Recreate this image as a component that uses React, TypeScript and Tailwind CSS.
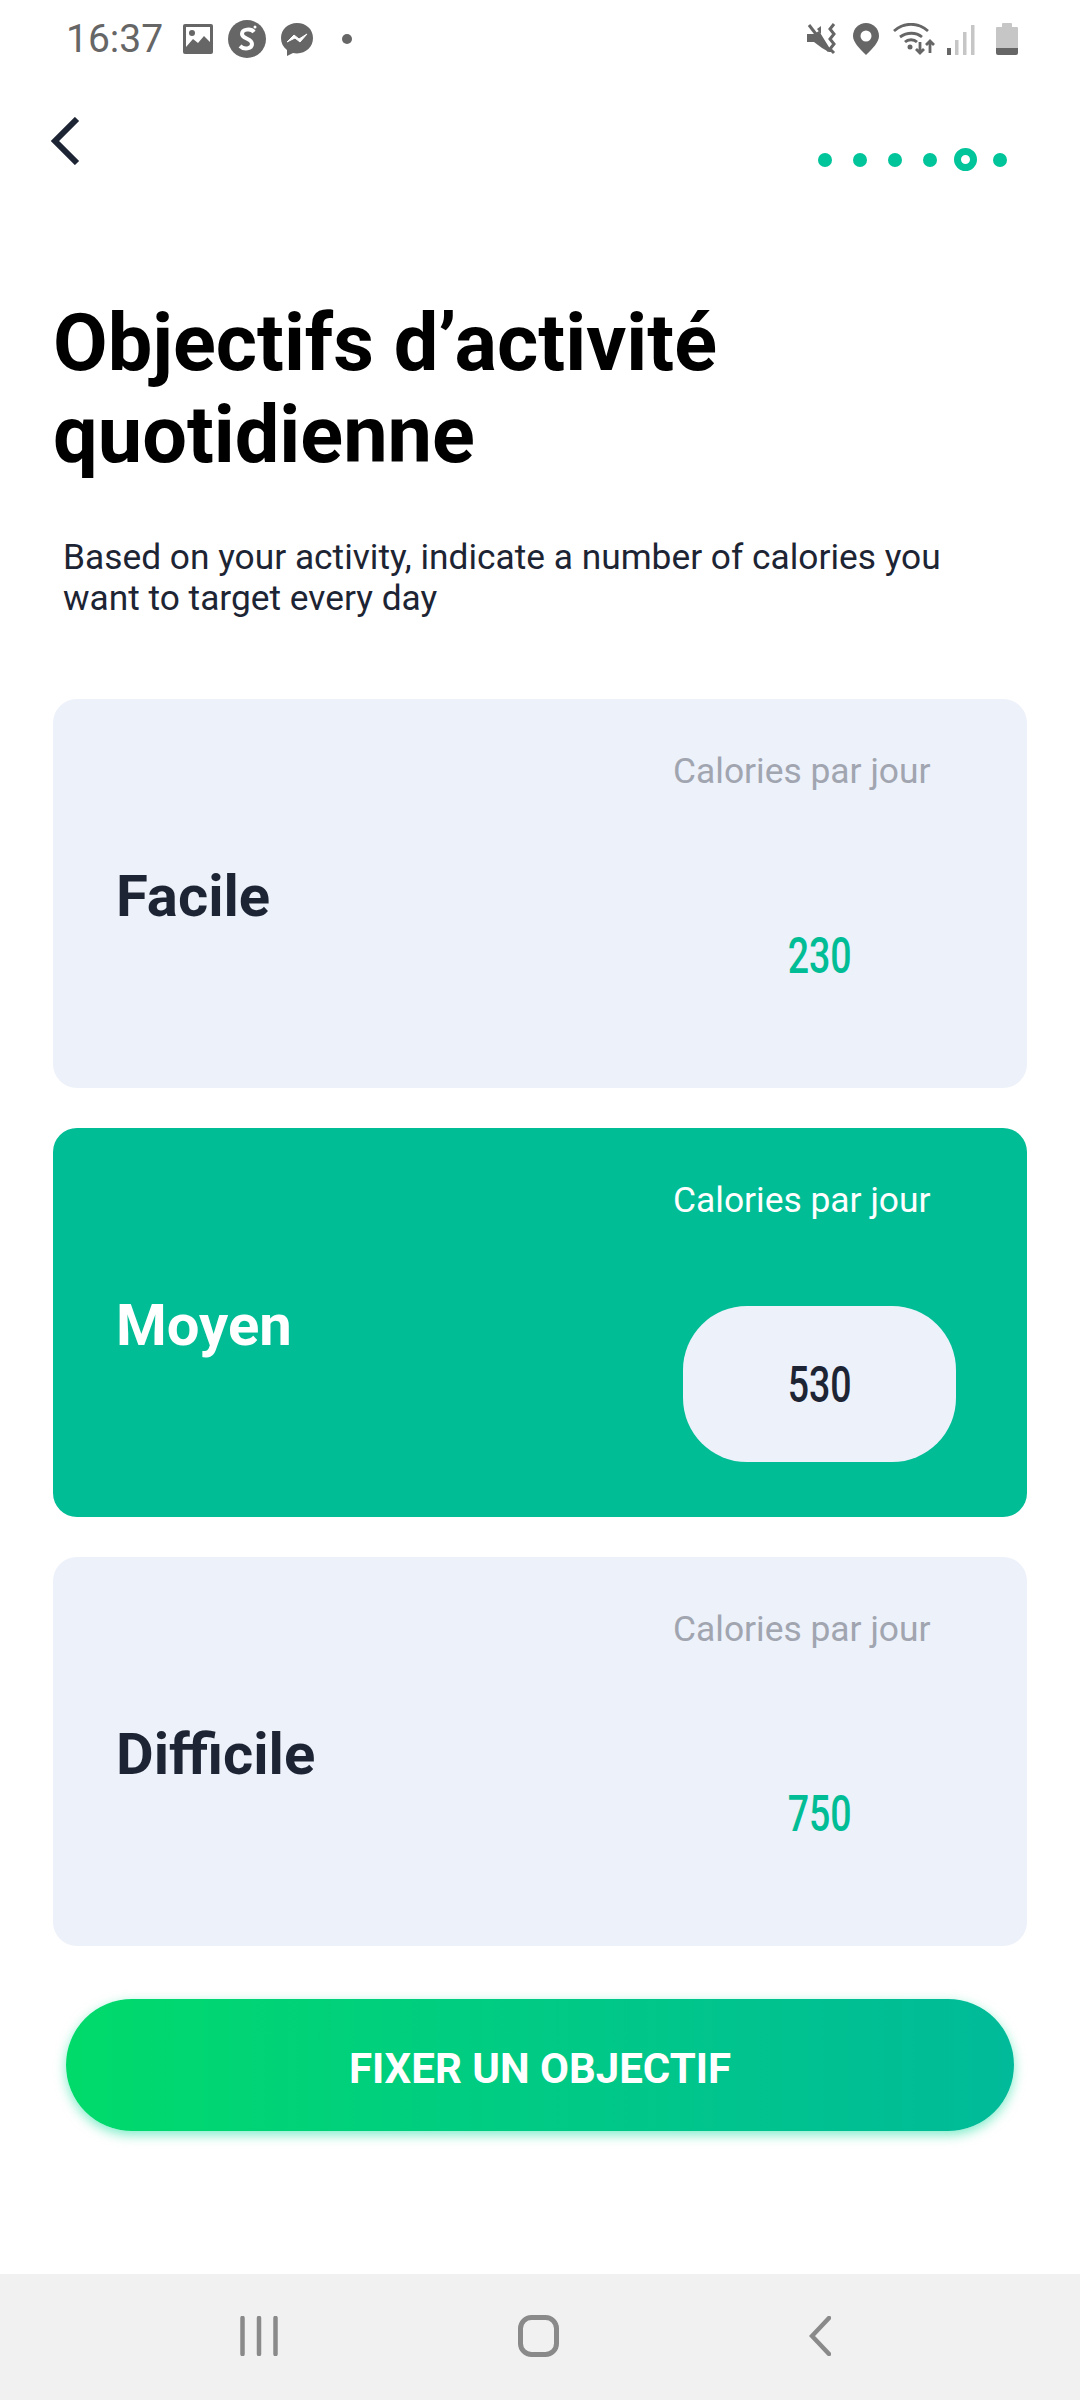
const Roboto = "font-['Roboto',sans-serif]";

const levels = [
  { name: "Facile", value: "230", active: false },
  { name: "Moyen", value: "530", active: true },
  { name: "Difficile", value: "750", active: false },
];

const StatusLeft = () => (
  <div className="flex items-center">
    <span className={`${Roboto} text-[39px] leading-none text-[#666]`}>16:37</span>
    <svg className="ml-[19px]" width="32" height="32" viewBox="0 0 32 32">
      <rect x="1" y="1" width="30" height="30" rx="2" fill="#666" />
      <rect x="4" y="4" width="24" height="22" fill="#fff" />
      <circle cx="10" cy="10" r="3" fill="#666" />
      <path d="M4 24l7-8 5 4 6-7 6 6v8H4z" fill="#666" />
    </svg>
    <svg className="ml-[14px]" width="38" height="38" viewBox="0 0 38 38">
      <circle cx="19" cy="19" r="19" fill="#666" />
      <path d="M26 12c-3-4-12-3-12 2 0 5 10 4 10 10 0 5-8 6-12 2" fill="none" stroke="#fff" strokeWidth="4" />
      <circle cx="27" cy="7" r="1.5" fill="#fff" />
    </svg>
    <svg className="ml-[15px]" width="32" height="34" viewBox="0 0 32 34">
      <path d="M16 1C7 1 0 7.500 0 16c0 5 2 9 6 12v6l6-3c1 .3 2.500 .4 4 .4 9 0 16-6.500 16-15.400S25 1 16 1z" fill="#666" />
      <path d="M6 20l7-7 5 4 8-5-7 8-5-4z" fill="#fff" stroke="#fff" strokeWidth="1" />
    </svg>
    <span className="ml-[29px] size-[10px] rounded-full bg-[#666]" />
  </div>
);

const StatusRight = () => (
  <div className="flex items-center">
    <svg width="32" height="32" viewBox="0 0 32 32">
      <path d="M0 11h7l5-3 13 21-3 0-7-4-8-6H0z" fill="#666" />
      <path d="M2 2l20 26" stroke="#666" strokeWidth="3" />
      <path d="M14 3v8l-4-5z" fill="#666" />
      <path d="M27 1l-4 5 4 5-4 5 4 5-4 5 4 4" fill="none" stroke="#666" strokeWidth="3" />
    </svg>
    <svg className="ml-[14px]" width="26" height="32" viewBox="0 0 26 32">
      <path d="M13 0C6 0 0 5.500 0 13c0 6 6 12 13 19 7-7 13-13 13-19C26 5.500 20 0 13 0z" fill="#666" />
      <circle cx="13" cy="13" r="5.500" fill="#fff" />
    </svg>
    <svg className="ml-[14px]" width="42" height="32" viewBox="0 0 42 32">
      <g fill="none" stroke="#666" strokeWidth="2.800">
        <path d="M1 8c10-9 24-9 34 0" />
        <path d="M7 14c7-5 16-5 22 0" />
        <path d="M12 19c3-3 9-3 12 0" />
        <path d="M27 19v11M23 26l4 4 4-4" />
        <path d="M37 30V18M33 22l4-4 4 4" />
      </g>
      <circle cx="17" cy="24" r="2.500" fill="#666" />
    </svg>
    <svg className="ml-[12px]" width="28" height="32" viewBox="0 0 28 32">
      <rect x="0" y="25" width="4" height="7" fill="#666" />
      <rect x="8" y="17" width="3.500" height="15" fill="#c6c6c6" />
      <rect x="16" y="9" width="3.500" height="23" fill="#c6c6c6" />
      <rect x="24" y="2" width="3.500" height="30" fill="#c6c6c6" />
    </svg>
    <svg className="ml-[21px]" width="22" height="32" viewBox="0 0 22 32">
      <path d="M6 1a1 1 0 0 1 1-1h8a1 1 0 0 1 1 1v3h5a1 1 0 0 1 1 1v20H0V5a1 1 0 0 1 1-1h5z" fill="#c6c6c6" />
      <path d="M0 25h22v5a2 2 0 0 1-2 2H2a2 2 0 0 1-2-2z" fill="#666" />
    </svg>
  </div>
);

const Dots = () => (
  <div className="flex items-center">
    <span className="size-[14px] rounded-full bg-[#00c49a]" />
    <span className="ml-[21px] size-[14px] rounded-full bg-[#00c49a]" />
    <span className="ml-[21px] size-[14px] rounded-full bg-[#00c49a]" />
    <span className="ml-[21px] size-[14px] rounded-full bg-[#00c49a]" />
    <span className="ml-[17px] size-[23px] rounded-full border-[7px] border-[#00c49a] bg-white" />
    <span className="ml-[16px] size-[14px] rounded-full bg-[#00c49a]" />
  </div>
);

const LevelCard = ({ name, value, active }: { name: string; value: string; active: boolean }) => {
  return (
    <div className={`flex h-[389px] items-start justify-between rounded-[24px] pl-[63px] pr-[71px] ${active ? "bg-[#00bd96]" : "bg-[#edf1fa]"}`}>
      <h2 className={`mt-[164px] ${Roboto} text-[58px] font-bold leading-[66px] ${active ? "text-white" : "text-[#1d2433]"}`}>
        {name}
      </h2>
      <div className="flex w-[283px] flex-col">
        <p className={`mt-[51px] ${Roboto} text-[35.4px] leading-[42px] ${active ? "text-white" : "text-[#a1a5b0]"}`}>
          Calories par jour
        </p>
        <div className={`mt-[85px] flex h-[156px] w-[273px] items-center justify-center self-end rounded-[64px] pt-[2px] ${active ? "bg-[#edf1fa]" : ""}`}>
          <span className={`${Roboto} scale-x-[0.75] text-[50px] font-medium leading-none ${active ? "text-[#1d2433]" : "text-[#00bd96]"}`}>
            {value}
          </span>
        </div>
      </div>
    </div>
  );
};

export default function App() {
  return (
    <div className="flex h-[2400px] w-[1080px] flex-col overflow-hidden bg-white">
      <div className="flex h-[78px] items-center justify-between pl-[66px] pr-[62px]">
        <StatusLeft />
        <StatusRight />
      </div>

      <div className="flex h-[100px] items-start justify-between pl-[50px] pr-[73px]">
        <svg className="mt-[39px]" width="30" height="48" viewBox="0 0 30 48" fill="none">
          <path d="M27 2L5 24l22 22" stroke="#1d2433" strokeWidth="6" />
        </svg>
        <div className="mt-[70px]">
          <Dots />
        </div>
      </div>

      <h1 className={`mt-[119px] pl-[53px] ${Roboto} text-[79.300px] font-bold leading-[92px] text-black`}>
        Objectifs d’activité
        <br />
        quotidienne
      </h1>

      <p className={`mt-[56px] pl-[63px] ${Roboto} text-[35.300px] leading-[41px] text-[#1d2433]`}>
        Based on your activity, indicate a number of calories you
        <br />
        want to target every day
      </p>

      <div className="mt-[80px] flex flex-col gap-[40px] px-[53px]">
        {levels.map((l) => (
          <LevelCard key={l.name} {...l} />
        ))}
      </div>

      <div className="mt-[53px] px-[66px]">
        <button className={`h-[132px] w-full rounded-[66px] bg-gradient-to-r from-[#00da6a] to-[#00ba99] pt-[7px] ${Roboto} text-[42px] font-bold text-white shadow-[0_4px_12px_rgba(0,220,150,0.5)]`}>
          FIXER UN OBJECTIF
        </button>
      </div>

      <div className="mt-auto flex h-[126px] items-center bg-[#f1f1f1] pb-[2px] pl-[240px]">
        <svg width="38" height="40" viewBox="0 0 38 40">
          <path d="M2.500 2v36M19 2v36M35.500 2v36" stroke="#8a8a8a" strokeWidth="4.500" strokeLinecap="round" />
        </svg>
        <svg className="ml-[240px]" width="41" height="42" viewBox="0 0 41 42" fill="none">
          <rect x="2.500" y="2.500" width="36" height="37" rx="11" stroke="#8a8a8a" strokeWidth="5" />
        </svg>
        <svg className="ml-[250px]" width="22" height="40" viewBox="0 0 22 40" fill="none">
          <path d="M20 2L3 20l17 18" stroke="#8a8a8a" strokeWidth="4.500" strokeLinecap="round" />
        </svg>
      </div>
    </div>
  );
}
